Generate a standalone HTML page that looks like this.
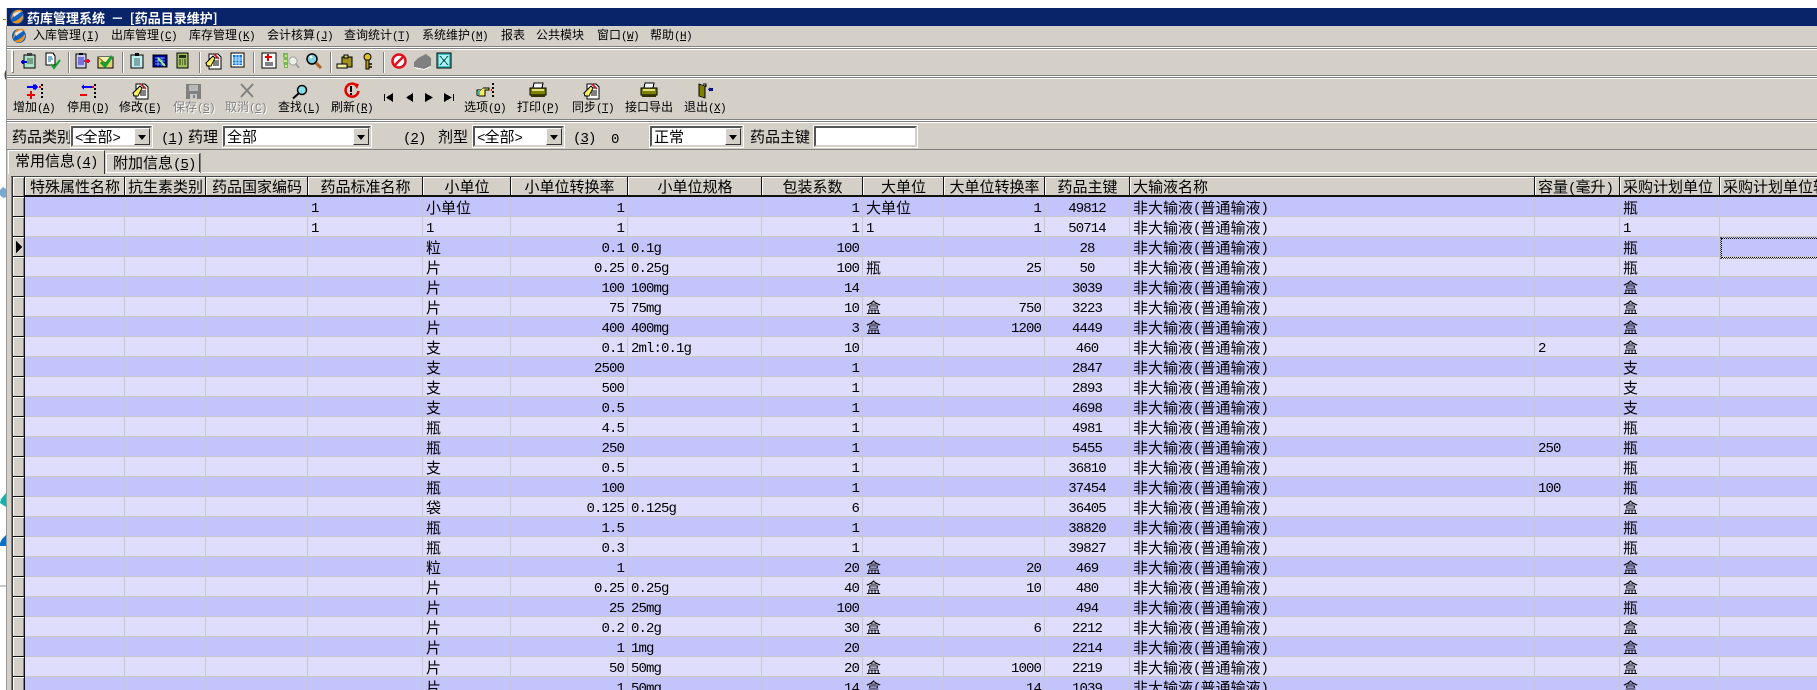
<!DOCTYPE html>
<html lang="zh"><head><meta charset="utf-8"><title>药库管理系统</title>
<style>
html,body{margin:0;padding:0;background:#fff;width:1817px;height:690px;overflow:hidden}
body{position:relative;font-family:"WenQuanYi Zen Hei","Noto Sans CJK SC",sans-serif;color:#000}
.a{position:absolute}
.ln{position:absolute;left:7px;right:0;height:1px}
.g{background:#808080}.w{background:#fff}
.t{position:absolute;white-space:nowrap;font-size:12px;line-height:14px}
.t i{font:normal 11px/0 "Liberation Mono",monospace;letter-spacing:-.6px}
.f{position:absolute;white-space:nowrap;font-size:15px;line-height:17px}
.f i{font:normal 14px/0 "Liberation Mono",monospace;letter-spacing:-.9px}
.dis{color:#808080;text-shadow:1px 1px 0 #fff}
.sep{position:absolute;top:52px;width:1px;height:21px;background:#808080;box-shadow:1px 0 0 #fff}
.cb{position:absolute;top:126px;height:21px;box-sizing:border-box;background:#fff;border:2px solid;border-color:#555 #d4d0c8 #d4d0c8 #555;outline:1px solid #fff;outline-offset:0;font-size:15px;line-height:17px;padding-left:2px;white-space:nowrap;overflow:hidden}
.cb i{font:normal 14px/0 "Liberation Mono",monospace;letter-spacing:-.9px}
.cb b{position:absolute;right:0;top:0;width:16px;height:17px;box-sizing:border-box;background:#d4d0c8;border:1px solid;border-color:#fff #333 #333 #fff}
.cb b:after{content:"";position:absolute;left:3px;top:6px;border:4px solid transparent;border-top:5px solid #000;border-bottom:0}
#grid{position:absolute;left:13px;top:177px;width:1804px;height:513px;overflow:hidden}
table{border-collapse:separate;border-spacing:0;table-layout:fixed;width:1804px}
td,th{box-sizing:border-box;height:20px;padding:0 3px;white-space:nowrap;overflow:hidden;font-weight:normal;font-size:15px;line-height:17px;border-right:1px solid #c8c8c8;border-bottom:1px solid #c8c8c8}
td{padding-top:2px}
th{background:#d4d0c8;border-right:1px solid #111;border-bottom:2px solid #111;box-shadow:inset 1px 1px 0 #fff;padding:0 0 0 1px}
th.l{text-align:left;padding-left:3px}
th i,td i{font:normal 14px/0 "Liberation Mono",monospace;letter-spacing:-.9px}
td i{position:relative;top:-1px}
td:first-child,th:first-child{background:#d4d0c8;border-right:1px solid #111;border-bottom:1px solid #111;box-shadow:inset 1px 1px 0 #fff,inset -1px 0 0 #808080;padding:0}
tr:nth-child(odd) td{background:#c4c4fc}
tr:nth-child(even) td{background:#dedefc}
tbody tr td:first-child{background:#d4d0c8}
td:nth-child(5),td:nth-child(8),td:nth-child(14),td:nth-child(7),td:nth-child(9),td:nth-child(11),td:nth-child(12){font:normal 14px/14px "Liberation Mono",monospace;letter-spacing:-.9px;padding-top:5px}
td:nth-child(7),td:nth-child(9),td:nth-child(11){text-align:right}
td:nth-child(12){text-align:center}
td:nth-child(16){border-right:0}
#cur{position:absolute;left:1721px;top:238px;width:100px;height:18px;border:1px dotted #000;outline:1px dotted #554}
</style></head><body>
<!-- desktop bits on the left -->
<svg class="a" style="left:0;top:0" width="7" height="690">
<rect x="3" y="19" width="3" height="1" fill="#c08020"/>
<path d="M6 70C4 72 4 78 6 80Z" fill="#444"/>
<path d="M0 190L3 187 6 189V197L3 198 0 195Z" fill="#7aa8d0"/>
<path d="M6 493L1 499 0 503 6 507Z" fill="#18b0a8"/>
<path d="M6 535L2 539 0 543 0 546 6 546Z" fill="#0c70c8"/>
<rect x="0" y="585" width="6" height="2" fill="#c8c8c8"/>
</svg>
<div class="a" style="left:6px;top:8px;width:1811px;height:682px;background:#d4d0c8"></div>
<div class="a" style="left:6px;top:26px;width:1px;height:664px;background:#999"></div>
<div class="a" style="left:11px;top:176px;width:1px;height:514px;background:#808080"></div>
<div class="a" style="left:12px;top:176px;width:1px;height:514px;background:#333"></div>
<!-- title -->
<div class="a" style="left:7px;top:8px;right:0;height:18px;background:#0a246a"></div>
<div class="t" style="left:27px;top:10px;color:#fff;font-size:13px;font-weight:bold;line-height:15px">药库管理系统 &nbsp;－ &nbsp;[药品目录维护]</div>
<!-- menu -->
<div class="t" style="left:33px;top:28px">入库管理<i>(<u>I</u>)</i></div>
<div class="t" style="left:111px;top:28px">出库管理<i>(<u>C</u>)</i></div>
<div class="t" style="left:189px;top:28px">库存管理<i>(<u>K</u>)</i></div>
<div class="t" style="left:267px;top:28px">会计核算<i>(<u>J</u>)</i></div>
<div class="t" style="left:344px;top:28px">查询统计<i>(<u>T</u>)</i></div>
<div class="t" style="left:422px;top:28px">系统维护<i>(<u>M</u>)</i></div>
<div class="t" style="left:501px;top:28px">报表</div>
<div class="t" style="left:536px;top:28px">公共模块</div>
<div class="t" style="left:597px;top:28px">窗口<i>(<u>W</u>)</i></div>
<div class="t" style="left:650px;top:28px">帮助<i>(<u>H</u>)</i></div>
<!-- bars -->
<div class="ln g" style="top:46px"></div><div class="ln w" style="top:47px"></div><div class="ln g" style="top:48px"></div><div class="ln w" style="top:49px"></div>
<div class="ln g" style="top:75px"></div><div class="ln w" style="top:76px"></div><div class="ln g" style="top:77px"></div><div class="ln w" style="top:78px"></div>
<div class="ln g" style="top:119px"></div><div class="ln w" style="top:120px"></div><div class="ln g" style="top:121px"></div><div class="ln w" style="top:122px"></div>
<div class="ln g" style="top:149px"></div>
<div class="a w" style="left:200px;right:0;top:172px;height:1px"></div>
<div class="a" style="left:11px;right:0;top:176px;height:1px;background:#444"></div>
<div class="a" style="left:11px;top:50px;width:2px;height:22px;background:#fff;box-shadow:1px 1px 0 #808080"></div>
<div class="sep" style="left:68px"></div><div class="sep" style="left:122px"></div><div class="sep" style="left:199px"></div><div class="sep" style="left:253px"></div><div class="sep" style="left:330px"></div><div class="sep" style="left:383px"></div>
<!-- toolbar text -->
<div class="t" style="left:13px;top:100px">增加<i>(<u>A</u>)</i></div>
<div class="t" style="left:67px;top:100px">停用<i>(<u>D</u>)</i></div>
<div class="t" style="left:119px;top:100px">修改<i>(<u>E</u>)</i></div>
<div class="t dis" style="left:173px;top:100px">保存<i>(<u>S</u>)</i></div>
<div class="t dis" style="left:225px;top:100px">取消<i>(<u>C</u>)</i></div>
<div class="t" style="left:278px;top:100px">查找<i>(<u>L</u>)</i></div>
<div class="t" style="left:331px;top:100px">刷新<i>(<u>R</u>)</i></div>
<div class="t" style="left:464px;top:100px">选项<i>(<u>O</u>)</i></div>
<div class="t" style="left:517px;top:100px">打印<i>(<u>P</u>)</i></div>
<div class="t" style="left:572px;top:100px">同步<i>(<u>T</u>)</i></div>
<div class="t" style="left:625px;top:100px">接口导出</div>
<div class="t" style="left:684px;top:100px">退出<i>(<u>X</u>)</i></div>
<!-- filter row -->
<div class="f" style="left:12px;top:128px">药品类别</div>
<div class="cb" style="left:71px;width:81px"><i>&lt;</i>全部<i>&gt;</i><b></b></div>
<div class="f" style="left:161px;top:128px"><i>(<u>1</u>)</i></div>
<div class="f" style="left:188px;top:128px">药理</div>
<div class="cb" style="left:223px;width:148px">全部<b></b></div>
<div class="f" style="left:403px;top:128px"><i>(<u>2</u>)</i></div>
<div class="f" style="left:438px;top:128px">剂型</div>
<div class="cb" style="left:473px;width:91px"><i>&lt;</i>全部<i>&gt;</i><b></b></div>
<div class="f" style="left:573px;top:128px"><i>(<u>3</u>)</i></div>
<div class="f" style="left:611px;top:129px"><i>0</i></div>
<div class="cb" style="left:650px;width:93px">正常<b></b></div>
<div class="f" style="left:750px;top:128px">药品主键</div>
<div class="cb" style="left:814px;width:103px"></div>
<!-- tabs -->
<div class="a" style="left:8px;top:150px;width:97px;height:24px;background:#d4d0c8;border-top:1px solid #fff;border-left:1px solid #fff;border-right:1px solid #333;box-sizing:border-box"></div>
<div class="a" style="left:106px;top:153px;width:94px;height:20px;background:#d4d0c8;border-top:1px solid #fff;border-left:1px solid #fff;border-right:1px solid #333;box-shadow:1px 0 0 #808080;box-sizing:border-box"></div>
<div class="a w" style="left:106px;top:172px;width:94px;height:1px"></div>
<div class="f" style="left:15px;top:152px">常用信息<i>(<u>4</u>)</i></div>
<div class="f" style="left:113px;top:154px">附加信息<i>(<u>5</u>)</i></div>
<!-- grid -->
<div id="grid"><table>
<colgroup><col style="width:12px"><col style="width:100px"><col style="width:81px"><col style="width:102px"><col style="width:115px"><col style="width:88px"><col style="width:117px"><col style="width:134px"><col style="width:101px"><col style="width:81px"><col style="width:101px"><col style="width:85px"><col style="width:405px"><col style="width:85px"><col style="width:100px"><col style="width:97px"></colgroup>
<thead><tr><th></th><th>特殊属性名称</th><th>抗生素类别</th><th>药品国家编码</th><th>药品标准名称</th><th>小单位</th><th>小单位转换率</th><th>小单位规格</th><th>包装系数</th><th>大单位</th><th>大单位转换率</th><th>药品主键</th><th class="l">大输液名称</th><th class="l">容量<i>(</i>毫升<i>)</i></th><th class="l">采购计划单位</th><th class="l" style="border-right:0">采购计划单位转换率</th></tr></thead>
<tbody>
<tr><td></td><td></td><td></td><td></td><td>1</td><td>小单位</td><td>1</td><td></td><td>1</td><td>大单位</td><td>1</td><td>49812</td><td>非大输液<i>(</i>普通输液<i>)</i></td><td></td><td>瓶</td><td></td></tr>
<tr><td></td><td></td><td></td><td></td><td>1</td><td><i>1</i></td><td>1</td><td></td><td>1</td><td><i>1</i></td><td>1</td><td>50714</td><td>非大输液<i>(</i>普通输液<i>)</i></td><td></td><td><i>1</i></td><td></td></tr>
<tr><td></td><td></td><td></td><td></td><td></td><td>粒</td><td>0.1</td><td>0.1g</td><td>100</td><td></td><td></td><td>28</td><td>非大输液<i>(</i>普通输液<i>)</i></td><td></td><td>瓶</td><td></td></tr>
<tr><td></td><td></td><td></td><td></td><td></td><td>片</td><td>0.25</td><td>0.25g</td><td>100</td><td>瓶</td><td>25</td><td>50</td><td>非大输液<i>(</i>普通输液<i>)</i></td><td></td><td>瓶</td><td></td></tr>
<tr><td></td><td></td><td></td><td></td><td></td><td>片</td><td>100</td><td>100mg</td><td>14</td><td></td><td></td><td>3039</td><td>非大输液<i>(</i>普通输液<i>)</i></td><td></td><td>盒</td><td></td></tr>
<tr><td></td><td></td><td></td><td></td><td></td><td>片</td><td>75</td><td>75mg</td><td>10</td><td>盒</td><td>750</td><td>3223</td><td>非大输液<i>(</i>普通输液<i>)</i></td><td></td><td>盒</td><td></td></tr>
<tr><td></td><td></td><td></td><td></td><td></td><td>片</td><td>400</td><td>400mg</td><td>3</td><td>盒</td><td>1200</td><td>4449</td><td>非大输液<i>(</i>普通输液<i>)</i></td><td></td><td>盒</td><td></td></tr>
<tr><td></td><td></td><td></td><td></td><td></td><td>支</td><td>0.1</td><td>2ml:0.1g</td><td>10</td><td></td><td></td><td>460</td><td>非大输液<i>(</i>普通输液<i>)</i></td><td>2</td><td>盒</td><td></td></tr>
<tr><td></td><td></td><td></td><td></td><td></td><td>支</td><td>2500</td><td></td><td>1</td><td></td><td></td><td>2847</td><td>非大输液<i>(</i>普通输液<i>)</i></td><td></td><td>支</td><td></td></tr>
<tr><td></td><td></td><td></td><td></td><td></td><td>支</td><td>500</td><td></td><td>1</td><td></td><td></td><td>2893</td><td>非大输液<i>(</i>普通输液<i>)</i></td><td></td><td>支</td><td></td></tr>
<tr><td></td><td></td><td></td><td></td><td></td><td>支</td><td>0.5</td><td></td><td>1</td><td></td><td></td><td>4698</td><td>非大输液<i>(</i>普通输液<i>)</i></td><td></td><td>支</td><td></td></tr>
<tr><td></td><td></td><td></td><td></td><td></td><td>瓶</td><td>4.5</td><td></td><td>1</td><td></td><td></td><td>4981</td><td>非大输液<i>(</i>普通输液<i>)</i></td><td></td><td>瓶</td><td></td></tr>
<tr><td></td><td></td><td></td><td></td><td></td><td>瓶</td><td>250</td><td></td><td>1</td><td></td><td></td><td>5455</td><td>非大输液<i>(</i>普通输液<i>)</i></td><td>250</td><td>瓶</td><td></td></tr>
<tr><td></td><td></td><td></td><td></td><td></td><td>支</td><td>0.5</td><td></td><td>1</td><td></td><td></td><td>36810</td><td>非大输液<i>(</i>普通输液<i>)</i></td><td></td><td>瓶</td><td></td></tr>
<tr><td></td><td></td><td></td><td></td><td></td><td>瓶</td><td>100</td><td></td><td>1</td><td></td><td></td><td>37454</td><td>非大输液<i>(</i>普通输液<i>)</i></td><td>100</td><td>瓶</td><td></td></tr>
<tr><td></td><td></td><td></td><td></td><td></td><td>袋</td><td>0.125</td><td>0.125g</td><td>6</td><td></td><td></td><td>36405</td><td>非大输液<i>(</i>普通输液<i>)</i></td><td></td><td>盒</td><td></td></tr>
<tr><td></td><td></td><td></td><td></td><td></td><td>瓶</td><td>1.5</td><td></td><td>1</td><td></td><td></td><td>38820</td><td>非大输液<i>(</i>普通输液<i>)</i></td><td></td><td>瓶</td><td></td></tr>
<tr><td></td><td></td><td></td><td></td><td></td><td>瓶</td><td>0.3</td><td></td><td>1</td><td></td><td></td><td>39827</td><td>非大输液<i>(</i>普通输液<i>)</i></td><td></td><td>瓶</td><td></td></tr>
<tr><td></td><td></td><td></td><td></td><td></td><td>粒</td><td>1</td><td></td><td>20</td><td>盒</td><td>20</td><td>469</td><td>非大输液<i>(</i>普通输液<i>)</i></td><td></td><td>盒</td><td></td></tr>
<tr><td></td><td></td><td></td><td></td><td></td><td>片</td><td>0.25</td><td>0.25g</td><td>40</td><td>盒</td><td>10</td><td>480</td><td>非大输液<i>(</i>普通输液<i>)</i></td><td></td><td>盒</td><td></td></tr>
<tr><td></td><td></td><td></td><td></td><td></td><td>片</td><td>25</td><td>25mg</td><td>100</td><td></td><td></td><td>494</td><td>非大输液<i>(</i>普通输液<i>)</i></td><td></td><td>瓶</td><td></td></tr>
<tr><td></td><td></td><td></td><td></td><td></td><td>片</td><td>0.2</td><td>0.2g</td><td>30</td><td>盒</td><td>6</td><td>2212</td><td>非大输液<i>(</i>普通输液<i>)</i></td><td></td><td>盒</td><td></td></tr>
<tr><td></td><td></td><td></td><td></td><td></td><td>片</td><td>1</td><td>1mg</td><td>20</td><td></td><td></td><td>2214</td><td>非大输液<i>(</i>普通输液<i>)</i></td><td></td><td>盒</td><td></td></tr>
<tr><td></td><td></td><td></td><td></td><td></td><td>片</td><td>50</td><td>50mg</td><td>20</td><td>盒</td><td>1000</td><td>2219</td><td>非大输液<i>(</i>普通输液<i>)</i></td><td></td><td>盒</td><td></td></tr>
<tr><td></td><td></td><td></td><td></td><td></td><td>片</td><td>1</td><td>50mg</td><td>14</td><td>盒</td><td>14</td><td>1039</td><td>非大输液<i>(</i>普通输液<i>)</i></td><td></td><td>盒</td><td></td></tr>
</tbody></table></div>
<div id="cur"></div>
<!-- icons -->
<svg class="a" style="left:0;top:0;pointer-events:none" width="1817" height="690" shape-rendering="crispEdges">
<defs>
<g id="doc"><path d="M3 1H12L15 4V16H3Z" fill="#fff" stroke="#000"/><path d="M5 5h7M7 8h6M7 10h6M7 12h6" stroke="#000"/><path d="M0 10L7 3 9 5 5 13H1Z" fill="#f8f060" stroke="#000"/><path d="M8 1L13 6" stroke="#c02020" stroke-width="2"/></g>
<g id="prn"><path d="M4 0H13L12 5H3Z" fill="#fff" stroke="#000"/><path d="M0 5H16V12H0Z" fill="#808000" stroke="#000"/><path d="M2 7H14" stroke="#e0e080" stroke-width="2"/><path d="M1 12H15V14H1Z" fill="#303000"/></g>
</defs>
<g shape-rendering="auto">
<circle cx="17" cy="17" r="7" fill="#1060c0"/><path d="M11 20Q17 10 23 12 22 9 17 10 12 11 11 20ZM12 22Q18 21 23 15 24 20 19 23 15 24 12 22Z" fill="#f09020"/><path d="M13 14L19 11 21 12 14 17Z" fill="#fff" opacity=".8"/>
<circle cx="19" cy="36" r="7" fill="#1060c0"/><path d="M13 39Q19 29 25 31 24 28 19 29 14 30 13 39ZM14 41Q20 40 25 34 26 39 21 42 17 43 14 41Z" fill="#f09020"/><path d="M15 33L21 30 23 31 16 36Z" fill="#fff" opacity=".8"/>
</g>
<!-- toolbar 1 -->
<g transform="translate(21,53)"><path d="M3 2H14V15H3Z" fill="#b0e0c8" stroke="#000"/><path d="M6 0H11V3H6Z" fill="#404040"/><path d="M6 6h6M6 8h6M6 10h6" stroke="#406040"/><path d="M0 9H6M2 7V11" stroke="#0000d0" stroke-width="2"/></g>
<g transform="translate(45,53)"><path d="M1 0H8L10 3V12H1Z" fill="#fff" stroke="#000"/><path d="M3 4h4M3 6h5M3 8h3" stroke="#0060a0"/><path d="M6 11L9 15 15 7" fill="none" stroke="#10a030" stroke-width="2" shape-rendering="auto"/></g>
<g transform="translate(75,53)"><path d="M1 1H11V15H1Z" fill="#c8c8f0" stroke="#000"/><path d="M4 0H8V2H4Z" fill="#000"/><path d="M3 5h6M3 7h6M3 9h6M3 11h6" stroke="#2020c0"/><path d="M9 8H15M13 6V10" stroke="#e01030" stroke-width="2"/></g>
<g transform="translate(98,54)"><path d="M0 3H15V14H0Z" fill="#e8d070" stroke="#000"/><path d="M0 3L7 9 15 3" fill="#f8f0b0" stroke="#806000"/><path d="M3 8L7 12 14 2" fill="none" stroke="#10a030" stroke-width="3" shape-rendering="auto"/></g>
<g transform="translate(131,53)"><path d="M0 2H12V15H0Z" fill="#c0f0f0" stroke="#000"/><path d="M4 0H8V3H4Z" fill="#000"/><path d="M3 6h6M3 8h6M3 10h6M3 12h6" stroke="#406060"/></g>
<g transform="translate(153,55)"><path d="M0 0H14V12H0Z" fill="#0000a0" stroke="#000"/><path d="M2 3h10M2 6h10M2 9h10M5 2v9M9 2v9" stroke="#60a0e0"/><path d="M5 3L12 11" stroke="#a0f080" stroke-width="2"/></g>
<g transform="translate(177,53)"><path d="M0 0H11V15H0Z" fill="#a0c060" stroke="#000"/><path d="M2 2H9V5H2Z" fill="#203010"/><path d="M2 7h2M5 7h1M7 7h2M2 9h2M5 9h1M7 9h2M2 11h2M5 11h1M7 11h2" stroke="#203010"/></g>
<use href="#doc" transform="translate(206,53)"/>
<g transform="translate(231,53)"><path d="M0 0H13V14H0Z" fill="#fff" stroke="#000"/><path d="M2 2H11V12H2Z" fill="#1070e0"/><path d="M2 5h9M2 7h9M2 10h9M5 2v10M8 2v10" stroke="#c0e8ff"/></g>
<g transform="translate(262,53)"><path d="M0 0H14V15H0Z" fill="#fff" stroke="#000"/><path d="M6 1V8M3 4H10" stroke="#e00000" stroke-width="2"/><path d="M3 10h8M3 12h8" stroke="#000"/></g>
<g transform="translate(283,53)"><path d="M0 0H5V15H1Z" fill="#60b040" opacity=".8"/><path d="M2 2h2v2h-2zM1 7h3v2h-3zM2 12h2v2h-2z" fill="#d0f080"/><circle cx="10" cy="8" r="4" fill="#e8f0e8" stroke="#a0a0a0"/><path d="M13 11L16 15" stroke="#a0a0a0" stroke-width="2"/></g>
<g transform="translate(306,53)" shape-rendering="auto"><circle cx="6" cy="6" r="5" fill="#80d0e0" stroke="#000" stroke-width="1.5"/><path d="M4 3L6 5" stroke="#fff" stroke-width="2"/><path d="M10 10L15 15" stroke="#b06020" stroke-width="3"/></g>
<g transform="translate(337,54)"><path d="M5 3H15V13H5Z" fill="#a09020" stroke="#000"/><path d="M7 1H11V4H7Z" fill="#e0d060" stroke="#000"/><path d="M0 10H10V14H0Z" fill="#f0f0a0" stroke="#000"/></g>
<g transform="translate(362,53)" shape-rendering="auto"><circle cx="5.500" cy="4" r="3.500" fill="#e0c020" stroke="#000"/><path d="M4 7H7V16H4Z" fill="#c0a000" stroke="#000"/><path d="M7 11H10M7 14H10" stroke="#000" stroke-width="1.500"/></g>
<g transform="translate(391,53)" shape-rendering="auto"><circle cx="8" cy="8" r="6.500" fill="#fff" stroke="#e01020" stroke-width="2.500"/><path d="M3.500 12.500L12.500 3.500" stroke="#e01020" stroke-width="2.500"/></g>
<path d="M418 58L426 54 431 58V66L424 69 414 67V62Z" fill="#808080"/><path d="M414 67L424 69 431 66 431 67 424 70 415 68Z" fill="#fff"/>
<g transform="translate(437,53)"><path d="M0 0H14V15H0Z" fill="#40c0c0" stroke="#000"/><path d="M2 2H12V13H2Z" fill="#b0f0f0"/><path d="M3 3L11 12M11 3L3 12" stroke="#006060"/></g>
<!-- toolbar 2 -->
<path d="M27 87H37M34 84.500V89.500" stroke="#0000ff" stroke-width="2"/><path d="M35 84L38 87 35 90Z" fill="#0000ff"/><path d="M27 95H35M31 91V99" stroke="#f00000" stroke-width="2"/><path d="M41 84h2v2h-2zM41 88h2v2h-2zM41 92h2v2h-2zM41 96h2v2h-2z" fill="#000"/><rect x="39" y="86" width="2" height="2" fill="#f00000"/>
<path d="M82 87H92" stroke="#0000ff" stroke-width="2"/><path d="M84 84L81 87 84 90Z" fill="#0000ff"/><path d="M80 95H87" stroke="#f00000" stroke-width="2"/><path d="M94 84h2v2h-2zM94 88h2v2h-2zM94 92h2v2h-2zM94 96h2v2h-2z" fill="#000"/><rect x="92" y="86" width="2" height="2" fill="#f00000"/>
<use href="#doc" transform="translate(133,83)"/>
<path d="M186 84H201V99H186Z" fill="#808080"/><path d="M189 85H198V91H189Z" fill="#b8b8b8"/><path d="M190 94H197V99H190Z" fill="#c8c8c8"/><rect x="193" y="95" width="2" height="3" fill="#808080"/>
<path d="M241 84L253 97M253 84L241 97" stroke="#808080" stroke-width="2" shape-rendering="auto"/>
<g shape-rendering="auto"><circle cx="302" cy="90" r="4.500" fill="#80e0f0" stroke="#000" stroke-width="1.500"/><path d="M298.500 93.500L293 98.500" stroke="#000" stroke-width="2"/></g>
<g shape-rendering="auto"><path d="M356 85A6.500 6.500 0 1 0 358.500 91" fill="none" stroke="#e00000" stroke-width="2.500"/><path d="M353 83L359 84 357 89Z" fill="#e00000"/></g><rect x="350" y="86" width="2" height="6" fill="#000"/><rect x="350" y="93" width="2" height="2" fill="#000"/>
<rect x="384" y="94" width="1" height="7" fill="#000"/><path d="M393 93V102L386 97.500Z" fill="#000"/>
<path d="M413 93V102L406 97.500Z" fill="#000"/><path d="M425 93V102L433 97.500Z" fill="#000"/>
<path d="M444 93V102L452 97.500Z" fill="#000"/><rect x="453" y="94" width="1" height="7" fill="#000"/>
<path d="M477 90H481L483 88H489V90H485V96H479L477 95Z" fill="#f8f060" stroke="#000" stroke-width=".7"/><rect x="478" y="90" width="2" height="5" fill="#30c0d0"/><path d="M492 83h2v2h-2zM492 87h2v2h-2zM492 91h2v2h-2zM492 95h2v2h-2z" fill="#000"/><rect x="491" y="89" width="1" height="2" fill="#f00000"/>
<use href="#prn" transform="translate(530,83)"/>
<use href="#doc" transform="translate(584,83)"/>
<use href="#prn" transform="translate(641,83)"/>
<path d="M699 84L705 86V98L699 96Z" fill="#808000" stroke="#000" stroke-width=".7"/><path d="M703 84H706V87" fill="none" stroke="#000"/><path d="M708 89L710 87V88H713V91H710V92Z" fill="#000090"/>
<!-- row arrow -->
<path d="M16 241V253L22 247Z" fill="#000"/>
</svg>
</body></html>
